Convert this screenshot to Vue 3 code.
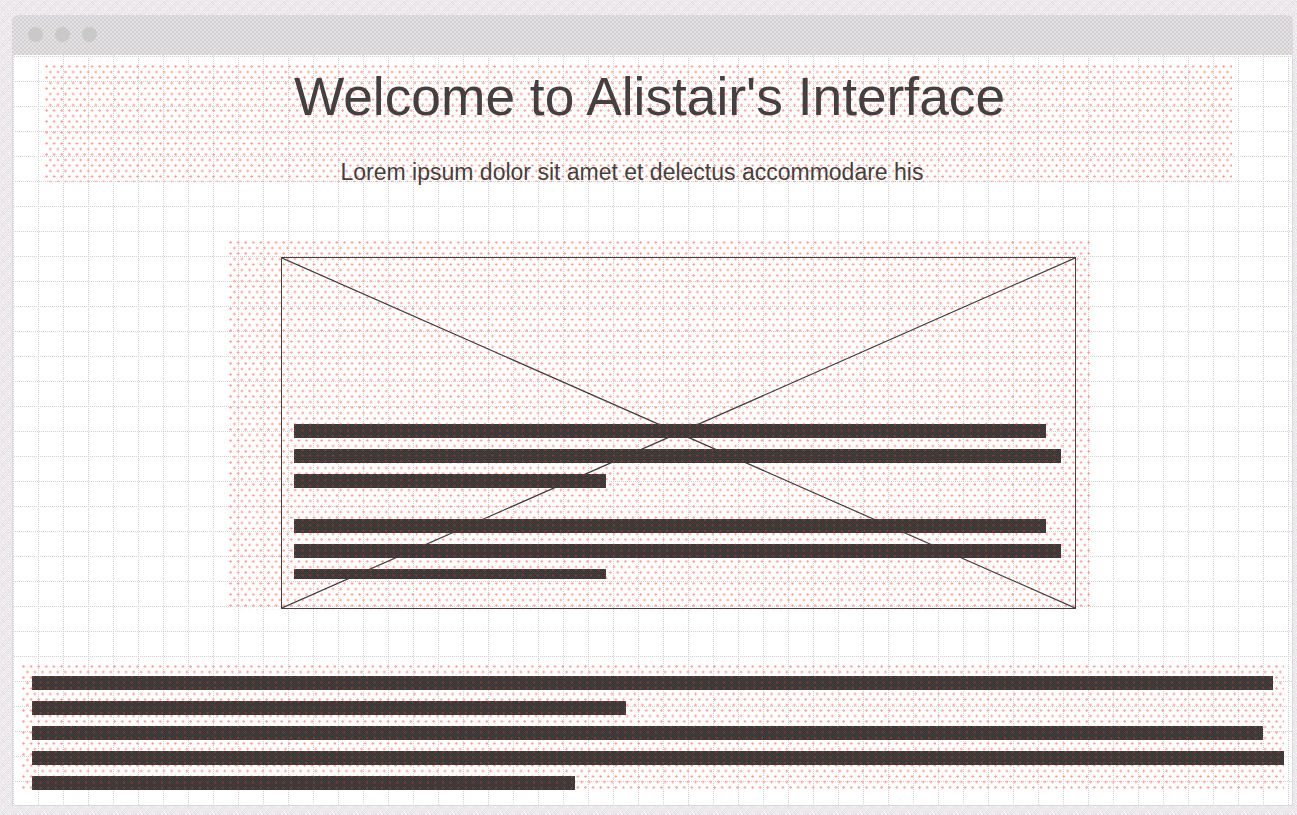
<script setup>
const imageGroups = [
  [
    { width: 752, height: 14 },
    { width: 767, height: 14 },
    { width: 312, height: 14 }
  ],
  [
    { width: 752, height: 14 },
    { width: 767, height: 14 },
    { width: 312, height: 10 }
  ]
]
const textBars = [1241, 594, 1231, 1252, 543]
</script>

<template>
  <div class="page">
    <div class="window">
      <div class="titlebar">
        <span class="light"></span>
        <span class="light"></span>
        <span class="light"></span>
      </div>
      <main class="canvas">
        <header class="hero dotted">
          <h1 class="title">Welcome to Alistair's Interface</h1>
          <p class="subtitle">Lorem ipsum dolor sit amet et delectus accommodare his</p>
        </header>
        <section class="media dotted">
          <div class="placeholder">
            <svg class="cross" viewBox="0 0 793 350" preserveAspectRatio="none">
              <line x1="0" y1="0" x2="793" y2="350" />
              <line x1="793" y1="0" x2="0" y2="350" />
            </svg>
            <div v-for="(group, g) in imageGroups" :key="g" class="group">
              <div
                v-for="(bar, b) in group"
                :key="b"
                class="bar"
                :style="{ width: bar.width + 'px', height: bar.height + 'px' }"
              ></div>
            </div>
          </div>
        </section>
        <section class="copy dotted">
          <div v-for="(w, i) in textBars" :key="i" class="bar tall" :style="{ width: w + 'px' }"></div>
        </section>
      </main>
    </div>
  </div>
</template>

<style>
html, body { margin: 0; background: #f1f1f1; }
</style>

<style scoped>
.page {
  box-sizing: border-box;
  width: 1297px;
  height: 815px;
  padding: 15px 4px 9px 12px;
  overflow: hidden;
  background-color: #f8f8f8;
  background-image:
    repeating-conic-gradient(#f3e4f1 0 25%, transparent 0 50%),
    repeating-conic-gradient(#e4f0e5 0 25%, transparent 0 50%),
    repeating-conic-gradient(#dadada 0 25%, transparent 0 50%);
  background-size: 6px 6px, 4px 4px, 2px 2px;
}
.window {
  box-sizing: border-box;
  height: 791px;
  display: flex;
  flex-direction: column;
  border: 1px solid #d9d9d9;
  border-top: 0;
  border-radius: 6px 6px 0 0;
  background: #fff;
}
.titlebar {
  flex: 0 0 40px;
  display: flex;
  align-items: center;
  gap: 12px;
  padding: 0 0 1px 16px;
  box-sizing: border-box;
  margin-left: -1px;
  margin-right: -1px;
  border-radius: 6px 6px 0 0;
  background-color: #d6d6d6;
  background-image:
    repeating-conic-gradient(#e6dfe6 0 25%, transparent 0 50%),
    repeating-conic-gradient(#ccd2cb 0 25%, transparent 0 50%);
  background-size: 4px 4px, 2px 2px;
}
.light {
  width: 15px;
  height: 15px;
  border-radius: 50%;
  background: #c9c9c9;
}
.canvas {
  flex: 1;
  min-height: 0;
  padding-top: 10px;
  background-image:
    repeating-conic-gradient(#fff 0 25%, transparent 0 50%),
    linear-gradient(#d2d0d6 1px, transparent 1px),
    linear-gradient(90deg, #d2d0d6 1px, transparent 1px);
  background-size: 2px 2px, 25px 25px, 25px 25px;
  background-position: 0 0, 0 1px, 0 1px;
}
.dotted {
  background-image:
    radial-gradient(circle at 1.5px 1.5px, #ff9c90 0 0.9px, transparent 1.4px),
    radial-gradient(circle at 1.5px 1.5px, #ff9c90 0 0.9px, transparent 1.4px);
  background-size: 7.6px 11px;
  background-position: 0 0, 3.8px 5.5px;
}
.hero {
  box-sizing: border-box;
  width: 1187px;
  height: 117px;
  margin-left: 32px;
  font-family: "Liberation Sans", Arial, sans-serif;
  color: #463f40;
}
.title {
  margin: 0;
  padding: 2px 0 0 22px;
  font-size: 53.3px;
  font-weight: 400;
  line-height: 60px;
  text-align: center;
}
.subtitle {
  margin: 0;
  padding: 32px 13px 0 0;
  font-size: 23px;
  line-height: 26px;
  text-align: center;
}
.media {
  box-sizing: border-box;
  width: 861px;
  height: 369px;
  margin: 59px 0 0 216px;
  padding: 16px 0 0 52px;
}
.placeholder {
  position: relative;
  box-sizing: border-box;
  width: 795px;
  height: 352px;
  border: 1px solid #463f40;
  padding: 166px 0 0 12px;
}
.cross {
  position: absolute;
  inset: 0;
  width: 100%;
  height: 100%;
}
.cross line {
  stroke: #463f40;
  stroke-width: 1.2;
}
.group {
  position: relative;
  display: flex;
  flex-direction: column;
  gap: 11px;
  margin-bottom: 31px;
}
.bar {
  background-color: #443e3e;
  background-image:
    radial-gradient(circle at 1px 1px, #7a4036 0 1px, transparent 1.2px),
    repeating-conic-gradient(#3a3433 0 25%, transparent 0 50%);
  background-size: 7.6px 5.5px, 2px 2px;
}
.copy {
  box-sizing: border-box;
  width: 1262px;
  height: 126px;
  margin: 55px 0 0 9px;
  padding: 11px 0 0 10px;
  display: flex;
  flex-direction: column;
  gap: 11px;
}
.tall {
  flex: 0 0 14px;
}
</style>
